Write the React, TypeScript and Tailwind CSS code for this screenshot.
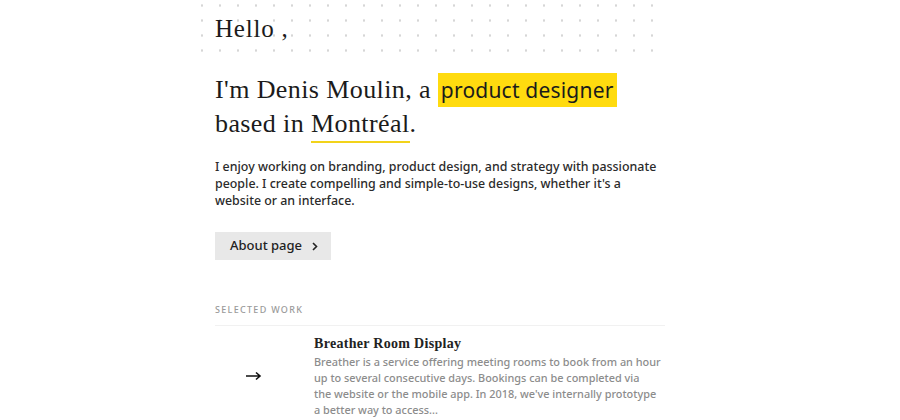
import React from 'react';

const serif = "font-['Liberation_Serif',serif]";
const sans = "font-['Noto_Sans',sans-serif]";

const Dots: React.FC<{ children: React.ReactNode }> = ({ children }) => (
  <div className="-ml-[19px] w-[465px] h-[52px] pl-[19px] flex items-center bg-[radial-gradient(circle,#d6d6d6_1px,transparent_1.3px)] bg-[length:18px_15px] bg-[position:-3px_-2px]">
    {children}
  </div>
);

export default function App() {
  return (
    <div className="min-h-screen bg-white flex justify-center text-[#1b1b1b]">
      <div className="w-[450px] ml-[-20px] flex flex-col">
        <Dots>
          <h1 className={`${serif} mt-[6px] text-[25px] leading-none tracking-[0.8px] pb-[2px]`}>Hello ,</h1>
        </Dots>

        <h2 className={`${serif} mt-[21px] text-[26px] leading-[33px] tracking-[0.4px]`}>
          I'm Denis Moulin, a{' '}
          <span className={`${sans} bg-[#ffdb0f] px-[3px] py-[3px] text-[21px] tracking-[0.2px]`}>product designer</span>
          <br />
          based in{' '}
          <span className="border-b-2 border-[#f2d31a] pb-[3px]">Montréal</span>.
        </h2>

        <p className={`${sans} mt-[18px] text-[12.4px] leading-[17px] font-medium text-[#2b2b2b]`}>
          I enjoy working on branding, product design, and strategy with passionate people. I create compelling and
          simple-to-use designs, whether it's a website or an interface.
        </p>

        <div className="mt-[23px]">
          <button className={`${sans} h-[28px] w-[116px] bg-[#e8e8e8] text-[13px] font-medium text-[#222] flex items-center pl-[15px] gap-[9px]`}>
            About page
            <svg width="8" height="9" viewBox="0 0 8 9" fill="none" stroke="#222" strokeWidth="1.6">
              <path d="M2 1l3.5 3.5L2 8" />
            </svg>
          </button>
        </div>

        <div className={`${sans} mt-[43px] text-[9px] tracking-[1.3px] font-medium text-[#9a9a9a] uppercase`}>Selected work</div>
        <div className="mt-[8px] h-px bg-[#f1f1f1]" />

        <div className="mt-[8px] flex">
          <div className="w-[99px] flex items-center pl-[30px]">
            <svg width="17" height="10" viewBox="0 0 17 10" fill="none" stroke="#111" strokeWidth="1.6">
              <path d="M1 5h14M11 1.5L15 5l-4 3.5" />
            </svg>
          </div>
          <div className="flex-1">
            <h3 className={`${serif} text-[14px] font-bold leading-[20px] text-[#222] tracking-[0.3px]`}>Breather Room Display</h3>
            <p className={`${sans} text-[10.9px] leading-[16.3px] font-medium text-[#8c8c8c] whitespace-nowrap`}>
              Breather is a service offering meeting rooms to book from an hour
              <br />
              up to several consecutive days. Bookings can be completed via
              <br />
              the website or the mobile app. In 2018, we've internally prototype
              <br />
              a better way to access...
            </p>
          </div>
        </div>
      </div>
    </div>
  );
}
